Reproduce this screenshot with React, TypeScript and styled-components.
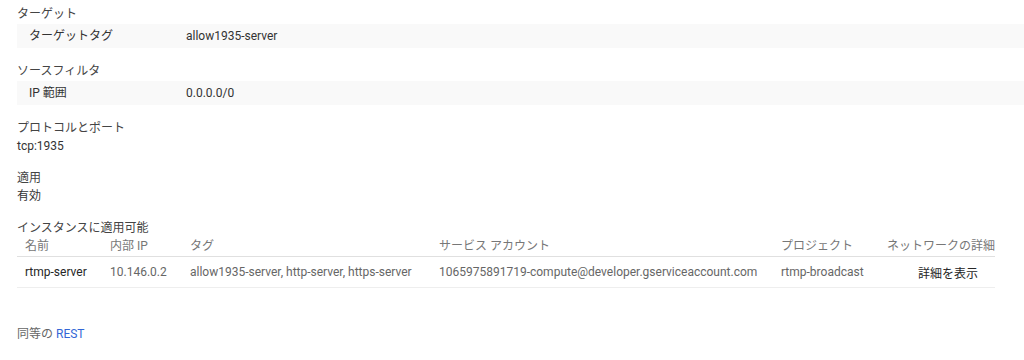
import React from 'react';
import styled, { createGlobalStyle } from 'styled-components';

const GlobalStyle = createGlobalStyle`
  body {
    margin: 0;
    background: #fff;
    font-family: Roboto, 'Noto Sans CJK JP', sans-serif;
    font-size: 12px;
    color: #333;
  }
`;

const Page = styled.div`
  padding: 5px 0 0 17px;
  display: flex;
  flex-direction: column;
`;

const Section = styled.section<{ $gap?: number }>`
  display: flex;
  flex-direction: column;
  margin-top: ${(p) => p.$gap ?? 0}px;
`;

const SectionTitle = styled.div`
  line-height: 18px;
  color: #444;
`;

const Value = styled.div`
  line-height: 18px;
  color: #333;
`;

const Band = styled.div`
  display: grid;
  grid-template-columns: 157px 1fr;
  align-items: center;
  height: 24px;
  margin-top: 1px;
  padding-left: 12px;
  background: #f9f9f9;
  line-height: 24px;
  color: #333;
`;

const Table = styled.div`
  width: 978px;
  display: flex;
  flex-direction: column;
`;

const cols = '85px 80px 249px 342px 106px 116px';

const HeadRow = styled.div`
  display: grid;
  grid-template-columns: ${cols};
  height: 19px;
  border-bottom: 1px solid #e0e0e0;
  color: #777;
  line-height: 18px;
`;

const BodyRow = styled.div`
  display: grid;
  grid-template-columns: ${cols};
  align-items: center;
  height: 30px;
  border-bottom: 1px solid #eeeeee;
  color: #666;
`;

const Cell = styled.div<{ $strong?: boolean; $right?: boolean }>`
  padding: 0 8px;
  white-space: nowrap;
  color: ${(p) => (p.$strong ? '#262626' : 'inherit')};
  text-align: ${(p) => (p.$right ? 'right' : 'left')};
  padding-right: ${(p) => (p.$right ? '17px' : '8px')};
`;

const Footer = styled.div`
  margin-top: 37px;
  line-height: 18px;
  color: #666;
`;

const RestLink = styled.a`
  color: #3367d6;
  text-decoration: none;
`;

const App: React.FC = () => {
  return (
    <>
      <GlobalStyle />
      <Page>
        <Section>
          <SectionTitle>ターゲット</SectionTitle>
          <Band>
            <span>ターゲットタグ</span>
            <span>allow1935-server</span>
          </Band>
        </Section>

        <Section $gap={14}>
          <SectionTitle>ソースフィルタ</SectionTitle>
          <Band>
            <span>IP 範囲</span>
            <span>0.0.0.0/0</span>
          </Band>
        </Section>

        <Section $gap={14}>
          <SectionTitle>プロトコルとポート</SectionTitle>
          <Value>tcp:1935</Value>
        </Section>

        <Section $gap={14}>
          <SectionTitle>適用</SectionTitle>
          <Value>有効</Value>
        </Section>

        <Section $gap={14}>
          <SectionTitle>インスタンスに適用可能</SectionTitle>
          <Table>
            <HeadRow>
              <Cell>名前</Cell>
              <Cell>内部 IP</Cell>
              <Cell>タグ</Cell>
              <Cell>サービス アカウント</Cell>
              <Cell>プロジェクト</Cell>
              <Cell>ネットワークの詳細</Cell>
            </HeadRow>
            <BodyRow>
              <Cell $strong>rtmp-server</Cell>
              <Cell>10.146.0.2</Cell>
              <Cell>allow1935-server, http-server, https-server</Cell>
              <Cell>1065975891719-compute@developer.gserviceaccount.com</Cell>
              <Cell>rtmp-broadcast</Cell>
              <Cell $strong $right>詳細を表示</Cell>
            </BodyRow>
          </Table>
        </Section>

        <Footer>
          同等の <RestLink href="#">REST</RestLink>
        </Footer>
      </Page>
    </>
  );
};

export default App;
